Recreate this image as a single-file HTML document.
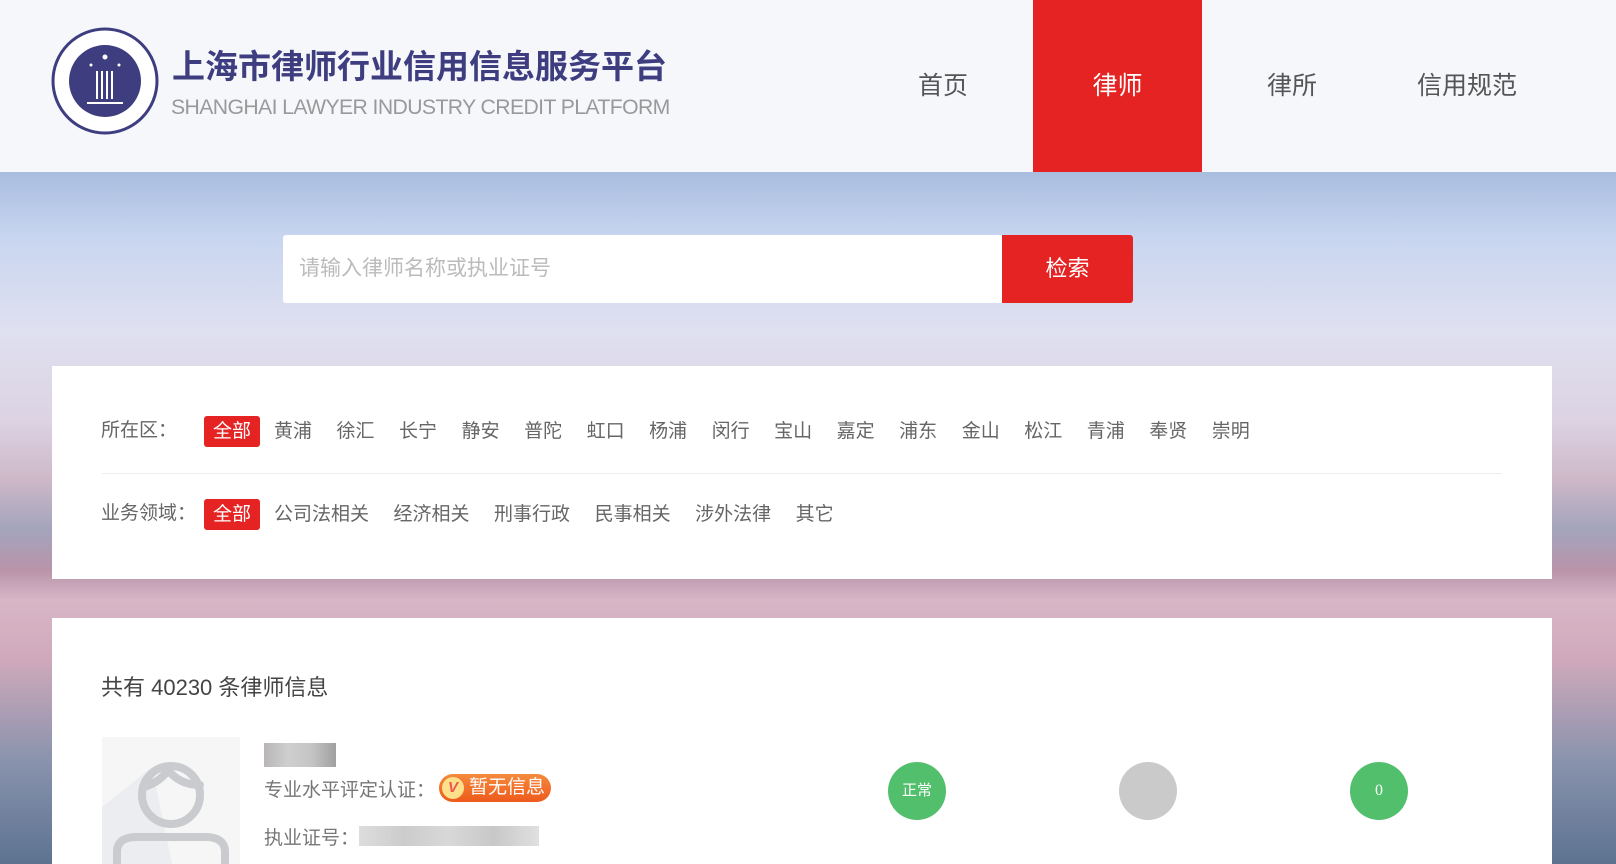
<!DOCTYPE html>
<html><head><meta charset="utf-8"><style>
*{margin:0;padding:0;box-sizing:border-box}
body{width:1616px;height:864px;overflow:hidden;font-family:"Liberation Sans","Noto Sans CJK SC",sans-serif;position:relative;
background:linear-gradient(180deg,#a9bde0 172px,#c9d6f0 240px,#dfe0f0 330px,#dcd3e3 420px,#cdb8c8 480px,#a3a4bc 530px,#b994aa 570px,#d8b6c6 600px,#cfa9bb 660px,#8a93ad 760px,#5c7390 864px);}
.hdr{position:absolute;left:0;top:0;width:1616px;height:172px;background:#f5f7fb}
.nav a{position:absolute;top:0;height:172px;line-height:172px;font-size:25px;color:#555;text-align:center;width:168px}
.panel{position:absolute;background:#fff;left:52px;width:1500px}
.f{position:absolute;font-size:19px;color:#666}
.f span{margin-left:24.5px}
.tag{display:inline-block;background:#e52323;color:#fff;padding:0 9px;border-radius:3px;line-height:31px;margin-left:0!important}
.circ{position:absolute;width:58px;height:58px;border-radius:50%;top:762px;color:#fff;text-align:center;line-height:58px;font-size:15px}
</style></head><body>
<div class="hdr">
<svg style="position:absolute;left:51px;top:27px" width="108" height="108" viewBox="0 0 108 108">
<circle cx="54" cy="54" r="52" fill="#fff" stroke="#3d3d80" stroke-width="3"/>
<circle cx="54" cy="54" r="36" fill="#3d3d80"/>
<g stroke="#fff" stroke-width="2"><line x1="46" y1="44" x2="46" y2="72"/><line x1="51" y1="44" x2="51" y2="72"/><line x1="56" y1="44" x2="56" y2="72"/><line x1="61" y1="44" x2="61" y2="72"/><line x1="36" y1="76" x2="72" y2="76"/></g>
<g fill="#fff"><circle cx="54" cy="30" r="2.5"/><circle cx="40" cy="38" r="1.5"/><circle cx="68" cy="38" r="1.5"/></g>
</svg>
<div style="position:absolute;left:172px;top:40px;font-size:33px;font-weight:bold;color:#3d3d80">上海市律师行业信用信息服务平台</div>
<div style="position:absolute;left:171px;top:96px;font-size:21.2px;color:#999;letter-spacing:-0.6px">SHANGHAI LAWYER INDUSTRY CREDIT PLATFORM</div>
<div class="nav">
<a style="left:859px">首页</a>
<a style="left:1033px;width:169px;background:#e52323;color:#fff">律师</a>
<a style="left:1208px">律所</a>
<a style="left:1383px">信用规范</a>
</div>
</div>
<div style="position:absolute;left:283px;top:235px;width:719px;height:68px;background:#fff;border-radius:3px 0 0 3px;font-size:21px;color:#bbb;line-height:68px;padding-left:16px">请输入律师名称或执业证号</div>
<div style="position:absolute;left:1002px;top:235px;width:131px;height:68px;background:#e52323;border-radius:0 3px 3px 0;font-size:22px;color:#fff;line-height:68px;text-align:center">检索</div>
<div class="panel" style="top:366px;height:213px">
<div style="position:absolute;left:50px;right:50px;top:107px;border-top:1px solid #eee"></div>
</div>
<div class="f" style="left:101px;top:414px;line-height:34px">所在区：</div>
<div class="f" style="left:204px;top:416px;line-height:31px;white-space:nowrap"><span class="tag">全部</span><span style="margin-left:14px">黄浦</span><span>徐汇</span><span>长宁</span><span>静安</span><span>普陀</span><span>虹口</span><span>杨浦</span><span>闵行</span><span>宝山</span><span>嘉定</span><span>浦东</span><span>金山</span><span>松江</span><span>青浦</span><span>奉贤</span><span>崇明</span></div>
<div class="f" style="left:101px;top:497px;line-height:34px">业务领域：</div>
<div class="f" style="left:204px;top:499px;line-height:31px;white-space:nowrap"><span class="tag">全部</span><span style="margin-left:14px">公司法相关</span><span>经济相关</span><span>刑事行政</span><span>民事相关</span><span>涉外法律</span><span>其它</span></div>
<div class="panel" style="top:618px;height:246px">
<div style="position:absolute;left:49px;top:52px;font-size:22px;color:#444">共有 40230 条律师信息</div>
<div style="position:absolute;left:50px;top:119px;width:138px;height:127px;background:#f6f6f6;overflow:hidden">
<svg width="138" height="127"><polygon points="0,127 0,70 50,30 70,127" fill="#ebedf0"/>
<circle cx="69" cy="58" r="29" fill="none" stroke="#c9cbce" stroke-width="8"/>
<path d="M42 50 Q58 45 66 33 Q78 48 98 48" fill="none" stroke="#c9cbce" stroke-width="8" stroke-linecap="round"/>
<path d="M15 127 V115 Q15 100 35 100 H103 Q123 100 123 115 V127" fill="none" stroke="#c9cbce" stroke-width="8"/></svg></div>
<div style="position:absolute;left:212px;top:125px;width:72px;height:24px;background:linear-gradient(90deg,#b8b5b5,#cfcfcf,#c4c4c4,#a0a0a0)"></div>
<div class="f" style="left:212px;top:157px;font-size:19px;color:#777">专业水平评定认证：</div>
<div style="position:absolute;left:387px;top:156px;width:112px;height:28px;border-radius:14px;background:linear-gradient(#f58a3c,#ee5a1c);color:#fff;font-size:19px;line-height:28px;padding-left:30px"><span style="position:absolute;left:3px;top:3px;width:22px;height:22px;border-radius:50%;background:#fce08a;color:#e55;font-size:15px;line-height:22px;text-align:center;font-style:italic;font-weight:bold">V</span>暂无信息</div>
<div class="f" style="left:212px;top:205px;font-size:19px;color:#777">执业证号：</div>
<div style="position:absolute;left:307px;top:208px;width:180px;height:20px;background:linear-gradient(90deg,#ddd,#ccc,#d8d8d8,#c8c8c8,#e0e0e0)"></div>
</div>
<div class="circ" style="left:888px;background:#52bf6c">正常</div>
<div class="circ" style="left:1119px;background:#cacaca"></div>
<div class="circ" style="left:1350px;background:#52bf6c;font-family:'Liberation Serif',serif;font-size:16px">0</div>
</body></html>
